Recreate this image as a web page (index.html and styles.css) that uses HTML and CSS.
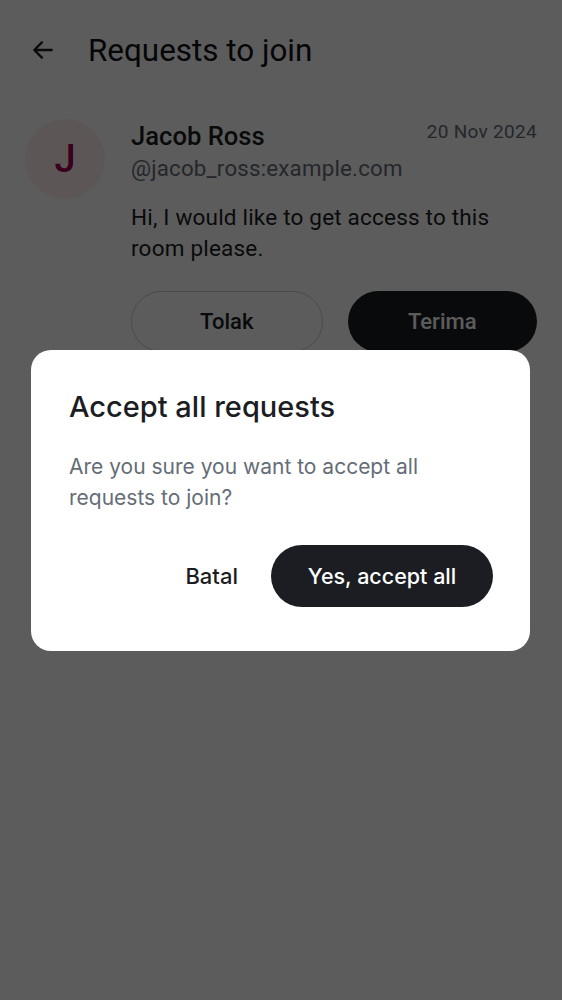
FILE: index.html
```html
<!DOCTYPE html>
<html>
<head>
<meta charset="utf-8">
<link rel="stylesheet" href="styles.css">
</head>
<body>
<div class="screen">
  <header class="topbar">
    <svg class="back" viewBox="0 0 24 24" width="26" height="26"><path d="M20 12H4.5M11 5l-7 7 7 7" fill="none" stroke="#1b1d22" stroke-width="2.2" stroke-linecap="round" stroke-linejoin="round"/></svg>
    <h1 class="title">Requests to join</h1>
  </header>
  <section class="request">
    <div class="avatar">J</div>
    <div class="req-body">
      <div class="req-head">
        <div class="name">Jacob Ross</div>
        <div class="date">20 Nov 2024</div>
      </div>
      <div class="handle">@jacob_ross:example.com</div>
      <p class="message">Hi, I would like to get access to this room please.</p>
      <div class="actions">
        <button class="btn btn-outline">Tolak</button>
        <button class="btn btn-solid">Terima</button>
      </div>
    </div>
  </section>
</div>
<div class="scrim">
  <div class="dialog">
    <h2 class="dlg-title">Accept all requests</h2>
    <p class="dlg-text">Are you sure you want to accept all requests to join?</p>
    <div class="dlg-actions">
      <button class="dlg-cancel">Batal</button>
      <button class="dlg-ok">Yes, accept all</button>
    </div>
  </div>
</div>
</body>
</html>
```
FILE: styles.css
```css
* { box-sizing: border-box; }
html, body { margin: 0; padding: 0; }
body {
  width: 562px;
  height: 1000px;
  background: #ffffff;
  font-family: Roboto, "Noto Sans", sans-serif;
  color: #1b1d22;
  overflow: hidden;
  position: relative;
}
.screen { height: 1000px; }
.topbar {
  display: flex;
  align-items: center;
  height: 100px;
  padding-left: 30px;
}
.back { flex: none; }
.title {
  margin: 0 0 0 32px;
  font-size: 31.4px;
  font-weight: 400;
  color: #101216;
}
.request {
  display: flex;
  padding: 20px 25px 0 25px;
  gap: 26px;
}
.avatar {
  flex: none;
  width: 80px;
  height: 80px;
  margin-top: -1px;
  border-radius: 50%;
  background: #ffedf2;
  color: #a3004f;
  font-size: 38px;
  font-weight: 500;
  display: flex;
  align-items: center;
  justify-content: center;
}
.req-body { flex: 1; }
.req-head {
  display: flex;
  justify-content: space-between;
  align-items: flex-start;
}
.name {
  font-size: 25.6px;
  font-weight: 500;
  line-height: 32px;
  color: #1b1d22;
}
.date {
  font-size: 19px;
  line-height: 24px;
  color: #656d77;
  letter-spacing: 0.3px;
}
.handle {
  font-size: 22.3px;
  line-height: 33px;
  color: #656d77;
  letter-spacing: 0.2px;
}
.message {
  margin: 17px 0 0 0;
  font-size: 22.5px;
  line-height: 31px;
  letter-spacing: 0.2px;
  color: #1b1d22;
}
.actions {
  display: flex;
  gap: 25px;
  margin-top: 27px;
}
.btn {
  flex: 1;
  height: 61px;
  border-radius: 31px;
  font-family: Roboto, sans-serif;
  font-size: 22px;
  font-weight: 500;
}
.btn-outline {
  background: #ffffff;
  border: 1px solid #c9cdd2;
  color: #1b1d22;
}
.btn-solid {
  background: #1b1d22;
  border: none;
  color: #ffffff;
}
.scrim {
  position: absolute;
  inset: 0;
  background: rgba(0, 0, 0, 0.64);
  display: flex;
  align-items: center;
  padding-left: 31px;
}
.dialog {
  width: 499px;
  background: #ffffff;
  border-radius: 20px;
  padding: 39px 37px 44px 38px;
  font-family: Inter, "Noto Sans", sans-serif;
}
.dlg-title {
  margin: 0;
  font-size: 29px;
  font-weight: 500;
  line-height: 36px;
  color: #1b1d22;
}
.dlg-text {
  margin: 26px 0 0 0;
  font-size: 21px;
  line-height: 31px;
  color: #656d77;
}
.dlg-actions {
  display: flex;
  justify-content: flex-end;
  align-items: center;
  gap: 33px;
  margin-top: 32px;
}
.dlg-cancel {
  background: none;
  border: none;
  padding: 0;
  font-family: Inter, sans-serif;
  font-size: 22px;
  font-weight: 500;
  color: #1b1d22;
}
.dlg-ok {
  width: 222px;
  height: 62px;
  border: none;
  border-radius: 31px;
  background: #1b1d22;
  color: #ffffff;
  font-family: Inter, sans-serif;
  font-size: 21.5px;
  font-weight: 500;
}
```
